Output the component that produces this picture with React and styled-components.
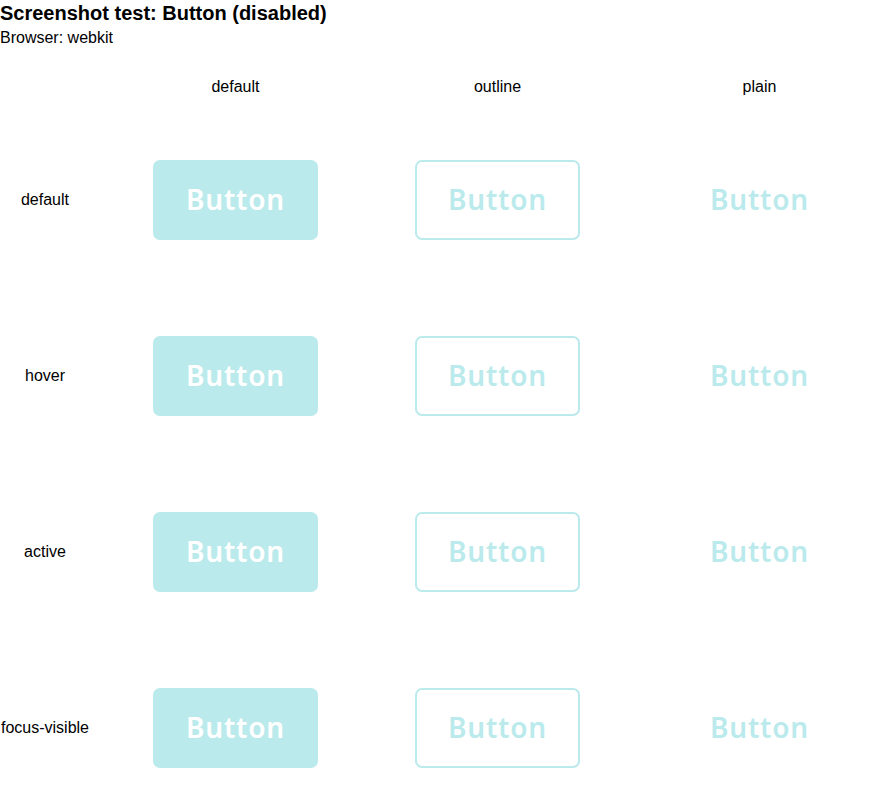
import React from 'react';
import styled, { createGlobalStyle } from 'styled-components';

const Global = createGlobalStyle`
  body {
    margin: 0;
    font-family: 'Liberation Sans', Arial, sans-serif;
    color: #000;
    background: #fff;
  }
`;

const Title = styled.h1`
  font-size: 20px;
  font-weight: 700;
  line-height: 23px;
  margin: 2px 0 0 0;
`;

const Subtitle = styled.div`
  font-size: 16px;
  line-height: 18px;
  margin-top: 4px;
`;

const Grid = styled.div`
  display: grid;
  grid-template-columns: 104px repeat(3, 262px);
  grid-template-rows: 50px repeat(4, 176px);
  margin-top: 15px;
`;

const ColHead = styled.div`
  font-size: 16px;
  display: flex;
  align-items: center;
  justify-content: center;
  padding-left: 1px;
`;

const RowHead = styled.div`
  width: 90px;
  font-size: 16px;
  display: flex;
  align-items: center;
  justify-content: center;
`;

const Cell = styled.div`
  display: flex;
  align-items: center;
  justify-content: center;
`;

const Btn = styled.button`
  width: 165px;
  height: 80px;
  box-sizing: border-box;
  border-radius: 7px;
  font-family: 'Noto Sans', 'Open Sans', sans-serif;
  font-size: 28px;
  font-weight: 600;
  letter-spacing: 0.8px;
  padding: 0 0 3px 1px;
  cursor: default;
  background: ${p => (p.$variant === 'default' ? '#bbeaec' : 'transparent')};
  color: ${p => (p.$variant === 'default' ? '#ffffff' : '#bbeaec')};
  border: 2px solid ${p => (p.$variant === 'plain' ? 'transparent' : '#bbeaec')};
`;

const variants = ['default', 'outline', 'plain'];
const states = ['default', 'hover', 'active', 'focus-visible'];

export default function App() {
  return (
    <>
      <Global />
      <Title>Screenshot test: Button (disabled)</Title>
      <Subtitle>Browser: webkit</Subtitle>
      <Grid>
        <div />
        {variants.map(v => (
          <ColHead key={v}>{v}</ColHead>
        ))}
        {states.map(s => (
          <React.Fragment key={s}>
            <RowHead>{s}</RowHead>
            {variants.map(v => (
              <Cell key={v}>
                <Btn $variant={v} disabled>Button</Btn>
              </Cell>
            ))}
          </React.Fragment>
        ))}
      </Grid>
    </>
  );
}
